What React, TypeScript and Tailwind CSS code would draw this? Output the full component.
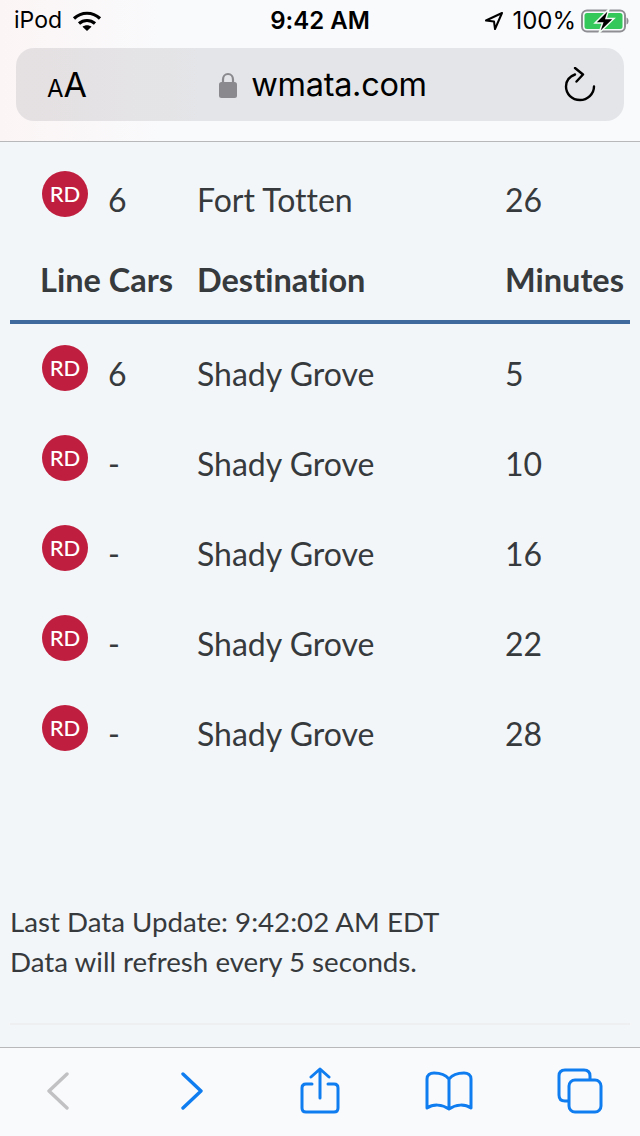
const rows = [
  { cars: '6', minutes: '5' },
  { cars: '-', minutes: '10' },
  { cars: '-', minutes: '16' },
  { cars: '-', minutes: '22' },
  { cars: '-', minutes: '28' },
];

const cols = 'grid grid-cols-[68px_89px_308px_1fr] pl-[30px]';

function Row({ cars, dest, minutes }: { cars: string; dest: string; minutes: string }) {
  return (
    <div className={`${cols} h-[90px] items-center pb-[2px] text-[32px] leading-[44px] text-[#373a3c]`}>
      <div className="mb-[12px] ml-[2px] flex h-[46px] w-[46px] items-center justify-center rounded-full bg-[#bf1e3e] text-[22px] font-medium leading-none text-white">
        RD
      </div>
      <div>{cars}</div>
      <div>{dest}</div>
      <div>{minutes}</div>
    </div>
  );
}

function StatusBar() {
  return (
    <div className="flex h-[48px] items-center justify-between pl-[14px] pr-[8px] pb-[7px] font-['Inter',sans-serif] text-[23px] text-black">
      <div className="flex w-[200px] items-center gap-[10px]">
        <span>iPod</span>
        <svg width="30" height="22" viewBox="0 0 30 22" fill="none" stroke="black" strokeWidth="3.2">
          <path d="M2 8.5C9.5 1.5 20.5 1.5 28 8.5" />
          <path d="M7 13.5C11.5 9.5 18.5 9.5 23 13.5" />
          <path d="M15 21L10.5 16.8C13 14.8 17 14.8 19.5 16.8Z" fill="black" stroke="none" />
        </svg>
      </div>
      <span className="text-[24px] font-semibold">9:42 AM</span>
      <div className="flex w-[206px] items-center justify-end gap-[10px]">
        <svg width="20" height="20" viewBox="0 0 20 20" fill="none" stroke="black" strokeWidth="2" strokeLinejoin="round" className="-mr-[2px]">
          <path d="M18 2L2 9.5L10 10.5L11 18Z" />
        </svg>
        <span className="text-[24px]">100%</span>
        <svg width="48" height="24" viewBox="0 0 48 24" fill="none" className="-ml-[5px] mr-[3px]">
          <rect x="1" y="1.5" width="43" height="21" rx="5" stroke="#8e8e93" strokeWidth="2" />
          <rect x="3.5" y="4" width="38" height="16" rx="2.5" fill="#34c759" />
          <path d="M45.5 8.5C47 9 47.5 10.5 47.5 12C47.5 13.5 47 15 45.5 15.5Z" fill="#8e8e93" />
          <path d="M28 0L14 14H21.5L18 24L33 9.5H25Z" fill="black" stroke="#f3fbf5" strokeWidth="1.5" />
        </svg>
      </div>
    </div>
  );
}

function AddressBar() {
  return (
    <div className="mx-[16px] flex h-[73px] items-center justify-between rounded-[18px] bg-gradient-to-r from-[#e5e0e2] to-[#e4e5e8] to-[30%] pl-[31px] pr-[28px] font-['Inter',sans-serif] text-black">
      <div className="flex items-baseline">
        <span className="text-[24px]">A</span>
        <span className="text-[34px]">A</span>
      </div>
      <div className="mr-[5px] flex items-center gap-[14px]">
        <svg width="18" height="26" viewBox="0 0 18 26" fill="none">
          <path d="M4 12V7.5C4 4.5 6 2 9 2C12 2 14 4.5 14 7.5V12" stroke="#8a8a8e" strokeWidth="2.2" />
          <rect x="0" y="10" width="18" height="16" rx="2.5" fill="#8a8a8e" />
        </svg>
        <span className="pt-[2px] text-[32.5px] tracking-[-0.3px]">wmata.com</span>
      </div>
      <svg width="32" height="36" viewBox="0 0 32 36" fill="none" stroke="black" strokeWidth="2.4" strokeLinecap="round" strokeLinejoin="round">
        <path d="M11 7.5C5.5 9.5 2 13.5 2 19.5C2 27 8 33 16 33C23.5 33 30 27 30 19.5" />
        <path d="M11 1L19 7.5L12.5 14.5" />
      </svg>
    </div>
  );
}

function Toolbar() {
  return (
    <div className="flex h-[89px] items-center border-t-[1.5px] border-[#b8b8bb] bg-[#f9fafc] pb-[3px] pl-[46px]">
      <svg width="24" height="38" viewBox="0 0 24 38" fill="none" stroke="#c1c1c3" strokeWidth="3.4" strokeLinecap="round" strokeLinejoin="round">
        <path d="M21 2L3 19L21 36" />
      </svg>
      <svg width="24" height="38" viewBox="0 0 24 38" fill="none" stroke="#0f7cf0" strokeWidth="3.4" strokeLinecap="round" strokeLinejoin="round" className="ml-[110px]">
        <path d="M3 2L21 19L3 36" />
      </svg>
      <svg width="40" height="48" viewBox="0 0 40 48" fill="none" stroke="#0f7cf0" strokeWidth="3" strokeLinecap="round" strokeLinejoin="round" className="ml-[96px]">
        <path d="M12 17H6C3.5 17 2 18.5 2 21V41C2 43.5 3.5 45 6 45H34C36.5 45 38 43.5 38 41V21C38 18.5 36.5 17 34 17H28" />
        <path d="M20 31V2M11 10L20 2L29 10" />
      </svg>
      <svg width="48" height="40" viewBox="0 0 48 40" fill="none" stroke="#0f7cf0" strokeWidth="3" strokeLinecap="round" strokeLinejoin="round" className="ml-[85px]">
        <path d="M24 8C20 3 15 2 9 2C5 2 2 4 2 8V37C8 33 17 33 24 38C31 33 40 33 46 37V8C46 4 43 2 39 2C33 2 28 3 24 8V38" />
      </svg>
      <svg width="46" height="46" viewBox="0 0 46 46" fill="none" stroke="#0f7cf0" strokeWidth="3" strokeLinejoin="round" className="ml-[84px]">
        <path d="M11 33H8C4 33 2 31 2 27V8C2 4 4 2 8 2H27C31 2 33 4 33 8V11" />
        <rect x="12" y="12" width="32" height="32" rx="6" />
      </svg>
    </div>
  );
}

export default function App() {
  return (
    <div className="flex h-[1136px] w-[640px] flex-col overflow-hidden bg-[#f3f6f9] font-['Lato',sans-serif] [font-variant-ligatures:none]">
      <div className="h-[142px] border-b-[1.5px] border-[#b8b8bb] bg-gradient-to-r from-[#fcf5f5] to-[#f9fafc] to-[25%]">
        <StatusBar />
        <AddressBar />
      </div>

      <div className="flex-1 px-[10px] pt-[14px]">
        <Row cars="6" dest="Fort Totten" minutes="26" />
        <div className={`${cols} h-[78px] items-center border-b-[4px] border-[#3f6a9e] pb-[6px] text-[32.5px] font-bold leading-[44px] text-[#373a3c]`}>
          <div className="col-span-2">Line Cars</div>
          <div>Destination</div>
          <div>Minutes</div>
        </div>
        <div className="pt-[6px]">
          {rows.map((r) => (
            <Row key={r.minutes} cars={r.cars} dest="Shady Grove" minutes={r.minutes} />
          ))}
        </div>
        <div className="mt-[122px] text-[27.7px] leading-[40px] text-[#373a3c]">
          <p>Last Data Update: 9:42:02 AM EDT</p>
          <p>Data will refresh every 5 seconds.</p>
        </div>
        <div className="mt-[41px] h-[2px] bg-[#edeff1]" />
      </div>

      <Toolbar />
    </div>
  );
}
